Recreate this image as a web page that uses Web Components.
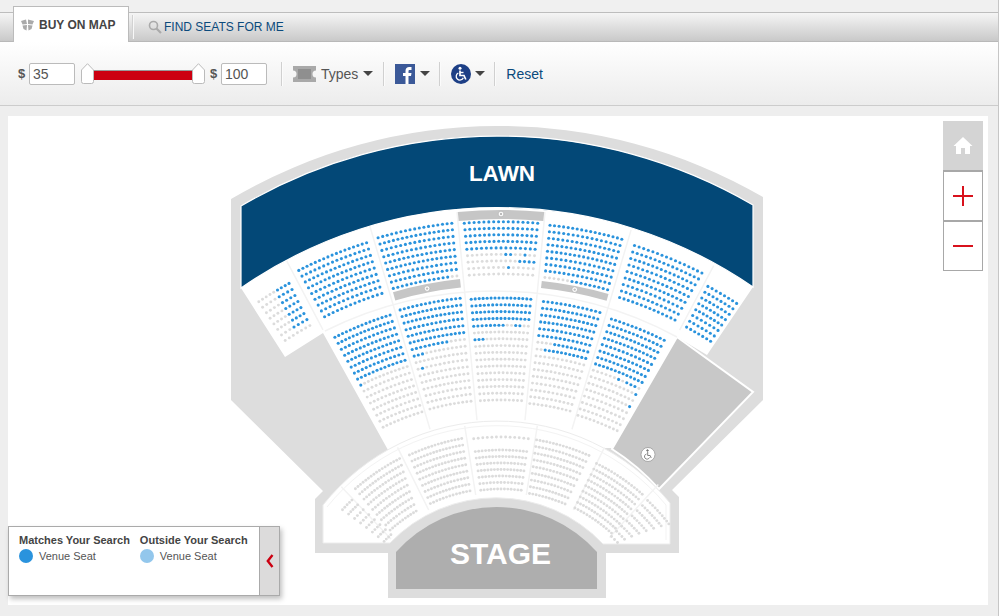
<!DOCTYPE html>
<html lang="en">
<head>
<meta charset="utf-8">
<title>Buy on map</title>
<style>
html, body { margin: 0; padding: 0; background: #eee; }
body { font-family: "Liberation Sans", Arial, sans-serif; color: #444; }
</style>
</head>
<body>
<ticket-app>
    <tab-bar slot="tabs"></tab-bar>
    <filter-bar slot="filters"></filter-bar>
    <seat-map slot="map">
        <map-controls></map-controls>
        <map-legend></map-legend>
    </seat-map>
</ticket-app>

<script>
'use strict';

const CARET = `<svg width="10" height="5" viewBox="0 0 10 5"><path d="M0 0h10L5 5z" fill="#444"/></svg>`;

class TicketApp extends HTMLElement {
    constructor()
    {
        super();
        this.attachShadow({ mode: 'open' }).innerHTML = `
        <style>
        :host {
            display: block;
            width: 998px;
            height: 616px;
            border-right: 1px solid #c6c6c6;
            overflow: hidden;
        }
        </style>
        <slot name="tabs"></slot>
        <slot name="filters"></slot>
        <slot name="map"></slot>`;
    }
}

class TabBar extends HTMLElement {
    constructor()
    {
        super();
        this.attachShadow({ mode: 'open' }).innerHTML = `
        <style>
        :host {
            display: flex;
            align-items: flex-end;
            height: 36px;
            padding: 6px 0 0 13px;
            background: linear-gradient(#f0f0f0 0, #f0f0f0 12px, #bdbdbd 12px, #bdbdbd 13px, #f5f5f5 13px, #c9c9c9 41px, #a9a9a9 42px) 0 0 no-repeat;
            font-size: 12px;
        }
        .active {
            box-sizing: border-box;
            width: 116px;
            height: 36px;
            display: flex;
            align-items: center;
            gap: 4px;
            padding: 0 0 0 6px;
            background: #fff;
            border: 1px solid #bbb;
            border-bottom: 0;
            font-weight: bold;
            color: #444;
        }
        .sep { width: 1px; height: 24px; margin: 0 0 3px 3px; background: #d2d2d2; border-right: 1px solid #f8f8f8; }
        .other {
            display: flex;
            align-items: center;
            gap: 2px;
            height: 30px;
            padding-left: 14px;
            color: #0b4a7c;
        }
        svg { display: block; }
        </style>
        <div class="active">
            <svg width="15" height="12" viewBox="0 0 15 12" fill="#aaa">
                <path d="M1 2 6 .5 7 5 2.500 5.500z"/><path d="M8 .5 14 2 12.500 5.500 8 5z"/>
                <path d="M2.500 6.500 7 6 6.500 11.500 3.500 10z"/><path d="M8 6 12.500 6.500 11.500 10 8.500 11.500z"/>
            </svg>
            <span>BUY ON MAP</span>
        </div>
        <div class="sep"></div>
        <div class="other">
            <svg width="14" height="14" viewBox="0 0 14 14" fill="none" stroke="#aaa">
                <circle cx="5.500" cy="5.500" r="4" stroke-width="1.600"/>
                <path d="M8.500 8.500 13 13" stroke-width="2.200"/>
            </svg>
            <span>FIND SEATS FOR ME</span>
        </div>`;
    }
}

class PriceSlider extends HTMLElement {
    constructor()
    {
        super();
        const handle = `<svg width="13" height="21" viewBox="0 0 13 21"><path d="M.5 7 6.500.7 12.500 7V18.500q0 2-2 2H2.500q-2 0-2-2z" fill="#fff" stroke="#bbb"/></svg>`;
        this.attachShadow({ mode: 'open' }).innerHTML = `
        <style>
        :host { display: flex; align-items: center; height: 21px; }
        .bar { width: 98px; height: 9px; background: #cc0011; border-top: 1px solid #999; margin-top: 2px; }
        svg { display: block; }
        </style>
        ${handle}<div class="bar"></div>${handle}`;
    }
}

class FilterBar extends HTMLElement {
    constructor()
    {
        super();
        this.attachShadow({ mode: 'open' }).innerHTML = `
        <style>
        :host {
            display: flex;
            align-items: center;
            box-sizing: border-box;
            height: 64px;
            padding: 0 0 0 18px;
            background: linear-gradient(#fff, #ececec);
            border-bottom: 1px solid #ccc;
            font-size: 14px;
            color: #555;
        }
        .dollar { font-weight: bold; font-size: 13px; width: 11px; }
        .price {
            box-sizing: border-box;
            width: 46px;
            height: 22px;
            padding-left: 3px;
            line-height: 20px;
            background: #fff;
            border: 1px solid #bbb;
            border-radius: 2px;
        }
        price-slider { margin: 0 5px 0 6px; }
        .sep { width: 1px; height: 24px; background: #d0d0d0; border-right: 1px solid #fbfbfb; }
        .group { display: flex; align-items: center; }
        .reset { color: #0b4a7c; margin-left: 10px; }
        svg { display: block; }
        </style>
        <span class="dollar">$</span><div class="price">35</div>
        <price-slider></price-slider>
        <span class="dollar">$</span><div class="price">100</div>
        <div class="sep" style="margin-left:14px"></div>
        <div class="group" style="margin-left:10px;gap:5px">
            <svg width="23" height="16" viewBox="0 0 23 16">
                <path d="M0 0h23v4.500a3.500 3.500 0 0 0 0 7V16H0v-4.500a3.500 3.500 0 0 0 0-7z" fill="#a9a9a9"/>
                <rect x="5" y="3" width="13" height="10" fill="#8f8f8f"/>
            </svg>
            <span>Types</span>
            ${CARET}
        </div>
        <div class="sep" style="margin-left:10px"></div>
        <div class="group" style="margin-left:10px;gap:5px">
            <svg width="20" height="20" viewBox="0 0 20 20">
                <rect width="20" height="20" fill="#3b5998"/>
                <path d="M10.500 20v-8H8V9h2.500V6.800C10.500 4.300 12 3 14.200 3H16.500v3h-1.600C13.800 6 13.500 6.500 13.500 7.400V9h3l-.5 3h-2.500v8z" fill="#fff"/>
            </svg>
            ${CARET}
        </div>
        <div class="sep" style="margin-left:9px"></div>
        <div class="group" style="margin-left:10px;gap:4px">
            <svg width="20" height="20" viewBox="0 0 20 20">
                <circle cx="10" cy="10" r="10" fill="#1d3f86"/>
                <circle cx="9" cy="4.200" r="1.500" fill="#fff"/>
                <path d="M9 6.500v5h4l1.800 4" fill="none" stroke="#fff" stroke-width="1.700"/>
                <path d="M9 8.500h3.500" fill="none" stroke="#fff" stroke-width="1.400"/>
                <path d="M7.300 9a3.700 3.700 0 1 0 5 4.800" fill="none" stroke="#fff" stroke-width="1.300"/>
            </svg>
            ${CARET}
        </div>
        <div class="sep" style="margin-left:9px"></div>
        <span class="reset">Reset</span>`;
    }
}

// polar helpers, angle in degrees from straight up
function polar(cx, cy, r, deg)
{
    const a = deg * Math.PI / 180;
    return [cx + r * Math.sin(a), cy - r * Math.cos(a)];
}

const UP = [501, 669];
const LOW = [501, 655];

function wedge(r0, r1, a0, a1)
{
    const p = [polar(...UP, r0, a0), polar(...UP, r0, a1), polar(...UP, r1, a1), polar(...UP, r1, a0)]
        .map(q => q.map(v => v.toFixed(1)).join(' '));
    return `M${p[0]}A${r0} ${r0} 0 0 1 ${p[1]}L${p[2]}A${r1} ${r1} 0 0 0 ${p[3]}Z`;
}

// outer/inner start and end angle, first and last row radius, row count, seat pitch,
// blue ranges per row (0..1 across the row); missing row = grey, true = all blue
const SECTIONS = [
    { c: UP, a: [-33.4, -28.8], b: [-33.3, -29.1], r: [440, 393], rows: 8, sp: 4.6,
        blue: [[[.52, 1]], [[.55, 1]], [[.5, 1]], [[.55, 1]], [[.5, 1]], [[.5, 1]], [[.5, 1]]] },
    { c: UP, a: [-26.9, -17.5], b: [-26.6, -17.6], r: [447, 394], rows: 9, sp: 4.7, blue: 'all' },
    { c: UP, a: [-15.9, -6.3], b: [-15.8, -6.4], r: [448.5, 395.5], rows: 9, sp: 4.7,
        blue: [true, true, true, true, true, true, true, true, [[0, .92]]] },
    { c: UP, a: [-4.7, 4.7], b: [-4.6, 4.6], r: [447.3, 395], rows: 9, sp: 4.8,
        blue: [true, true, true, true, true, [[.55, .66], [.8, .92]], [[.78, 1]], [[.58, .63]]] },
    { c: UP, a: [6.3, 15.7], b: [6.4, 15.7], r: [446.5, 394], rows: 9, sp: 4.7,
        blue: [true, true, true, true, true, true, true, true, [[.42, 1]]] },
    { c: UP, a: [17.5, 26.9], b: [17.7, 26.5], r: [444, 390], rows: 9, sp: 4.7, blue: 'all' },
    { c: UP, a: [28.4, 32.8], b: [28.5, 32.6], r: [435, 389], rows: 8, sp: 4.6, blue: 'all' },

    { c: UP, a: [-26.6, -17.4], b: [-26, -17.1], r: [371, 269], rows: 16, sp: 4.3,
        blue: [true, true, true, true, true, true, true, true, [[0, .05]]] },
    { c: UP, a: [-15.7, -6.3], b: [-15.3, -6.4], r: [373, 269.500], rows: 16, sp: 4.3,
        blue: [true, true, true, true, true, true, [[0, .68]], [[0, .2]], null, [[.06, .12]]] },
    { c: UP, a: [-4.6, 4.6], b: [-4.4, 4.4], r: [371, 269], rows: 16, sp: 4.1,
        blue: [true, true, true, true, [[0, .55], [.7, .85]], null, [[0, .19]]] },
    { c: UP, a: [6.6, 15.5], b: [6.2, 15], r: [370, 267], rows: 16, sp: 4.3,
        blue: [true, true, true, true, true, true, [[.28, 1]], [[.14, 1]]] },
    { c: UP, a: [17.5, 26.4], b: [16.9, 26], r: [367, 265], rows: 16, sp: 4.3,
        blue: [true, true, true, true, true, true, true, true, [[.5, .56], [.68, .96]], [[.92, 1]], null, [[.94, 1]]] },

    { c: LOW, a: [-7.2, 7.2], b: [-7.2, 7.2], r: [218, 218], rows: 1, sp: 4.4 },
    { c: LOW, a: [-7.2, 7.2], b: [-7, 7], r: [205, 166], rows: 7, sp: 3.4 },
    { c: LOW, a: [-24.6, -10.3], b: [-25, -10.7], r: [220, 167], rows: 9, sp: 3.4 },
    { c: LOW, a: [9.4, 23.8], b: [10, 23], r: [218, 164], rows: 9, sp: 3.4 },
    { c: LOW, a: [-41.2, -27.3], b: [-41.6, -30.5], r: [221, 167], rows: 9, sp: 3.4 },
    { c: LOW, a: [26.5, 41.3], b: [26.7, 42.2], r: [214, 164.500], rows: 9, sp: 3.4 },
    { c: LOW, a: [-47.5, -43.9], b: [-45.8, -42.5], r: [215, 163], rows: 8, sp: 3.6 },
    { c: LOW, a: [43.5, 52], b: [43, 46], r: [213, 162], rows: 8, sp: 3.6 },
];

function seatDots()
{
    let out = '';
    for (const s of SECTIONS) {
        for (let row = 0; row < s.rows; row++) {
            const f = s.rows > 1 ? row / (s.rows - 1) : 0;
            const r = s.r[0] + (s.r[1] - s.r[0]) * f;
            const a0 = s.a[0] + (s.b[0] - s.a[0]) * f;
            const a1 = s.a[1] + (s.b[1] - s.a[1]) * f;
            const arc = (a1 - a0) * Math.PI / 180 * r;
            const n = Math.round(arc / s.sp);
            const spec = s.blue === 'all' ? true : (s.blue ? s.blue[row] : null);
            for (let i = 0; i <= n; i++) {
                const t = i / n;
                const [x, y] = polar(...s.c, r, a0 + (a1 - a0) * t);
                const on = spec === true || (Array.isArray(spec) && spec.some(q => t >= q[0] && t <= q[1]));
                out += `<circle cx="${x.toFixed(1)}" cy="${y.toFixed(1)}" r="${on ? 1.55 : 1.45}" fill="${on ? '#2a93dd' : '#dcdcdc'}"/>`;
            }
        }
    }
    return out;
}

function radial(c, deg, r0, r1)
{
    const [x0, y0] = polar(...c, r0, deg);
    const [x1, y1] = polar(...c, r1, deg);
    return `M${x0.toFixed(1)} ${y0.toFixed(1)}L${x1.toFixed(1)} ${y1.toFixed(1)}`;
}

function aisleMark(x, y)
{
    return `<circle cx="${x}" cy="${y}" r="2.800" fill="#fff" stroke="#aaa" stroke-width=".6"/><circle cx="${x}" cy="${y}" r="1.200" fill="#bbb"/>`;
}

class SeatMap extends HTMLElement {
    constructor()
    {
        super();
        const lines = [
            radial(UP, -5.5, 250, 459), radial(UP, 5.5, 250, 459),
            radial(UP, -16.5, 250, 462), radial(UP, 16.5, 250, 458),
            radial(UP, -27.7, 383, 461), radial(UP, 27.8, 383, 456),
            radial(LOW, -9, 162, 232), radial(LOW, 9, 162, 232),
            radial(LOW, -26.5, 162, 232), radial(LOW, 26.5, 162, 232),
            radial(LOW, -43.5, 160, 232), radial(LOW, 42.7, 160, 232),
        ].join('');
        const mid = polar(...UP, 387.5, -11);
        const mid2 = polar(...UP, 386.5, 11);
        this.attachShadow({ mode: 'open' }).innerHTML = `
        <style>
        :host {
            display: block;
            position: relative;
            width: 980px;
            height: 489px;
            margin: 10px 0 0 8px;
            background: #fff;
        }
        svg { display: block; }
        text { font-family: "Liberation Sans", Arial, sans-serif; font-weight: bold; fill: #fff; text-anchor: middle; }
        </style>
        <svg width="980" height="489" viewBox="8 116 980 489">
            <path d="M231 199A527 527 0 0 1 763 197V400L672 490 679 497V553H606V598H388V553H315V499L323 491 231 400Z" fill="#dddddd"/>
            <path d="M241 288A450 450 0 0 1 753 287L707 355 677 337 613 448 388 450 323 333 285 357Z" fill="#fff"/>
            <path d="M241 206A507 507 0 0 1 753 205V287A450 450 0 0 0 241 288Z" fill="#034877" stroke="#fff" stroke-width="1.200"/>
            <path d="M677 337 753 392 659 489A223 223 0 0 0 612 449Z" fill="#c8c8c8" stroke="#fff" stroke-width="2"/>
            <path d="M323 505A223 223 0 0 1 670 503V544H603A147 147 0 0 0 390 543H323Z" fill="#fff" stroke="#ececec"/>
            <path d="M327 507A219 219 0 0 1 666 505V540" fill="none" stroke="#f3f3f3"/>
            <path d="${lines}M325 331A383 383 0 0 1 677 337" fill="none" stroke="#f3f3f3" stroke-width="1.500"/>
            <path d="${wedge(459, 450, -5.4, 5.4)}" fill="#c6c6c6"/>
            <path d="${wedge(392, 383.500, -16, -6)}" fill="#c6c6c6"/>
            <path d="${wedge(390, 383, 6, 16)}" fill="#c6c6c6"/>
            ${aisleMark(501, 214)}
            ${aisleMark(mid[0].toFixed(1), mid[1].toFixed(1))}
            ${aisleMark(mid2[0].toFixed(1), mid2[1].toFixed(1))}
            ${seatDots()}
            <path d="M396 552A134.700 134.700 0 0 1 597 552V589H396Z" fill="#aeaeae"/>
            <text x="502" y="181" font-size="22.500">LAWN</text>
            <text x="500.500" y="564" font-size="30">STAGE</text>
            <circle cx="648" cy="454.500" r="7" fill="#fff" stroke="#999" stroke-width=".8"/>
            <g fill="none" stroke="#777" stroke-width=".9">
                <circle cx="647.500" cy="450.500" r=".8" fill="#777"/>
                <path d="M647.700 452v3.500h2.500l1 2.500"/>
                <path d="M646.500 454a2.600 2.600 0 1 0 3 3.500"/>
            </g>
        </svg>
        <slot></slot>`;
    }
}

class MapControls extends HTMLElement {
    constructor()
    {
        super();
        this.attachShadow({ mode: 'open' }).innerHTML = `
        <style>
        :host {
            position: absolute;
            top: 5px;
            left: 935px;
            display: flex;
            flex-direction: column;
            width: 40px;
        }
        .btn {
            box-sizing: border-box;
            height: 50px;
            display: flex;
            align-items: center;
            justify-content: center;
            background: #fff;
            border: 1px solid #a8a8a8;
        }
        .btn.home { background: #d4d4d4; border: 0; border-bottom: 1px solid #a8a8a8; }
        svg { display: block; }
        </style>
        <div class="btn home">
            <svg width="20" height="19" viewBox="0 0 20 19"><path d="M10 1 19.500 10H17V18H12V12H8V18H3V10H.5z" fill="#fff"/></svg>
        </div>
        <div class="btn">
            <svg width="20" height="20" viewBox="0 0 20 20"><path d="M0 10h20M10 0v20" stroke="#d8111c" stroke-width="2"/></svg>
        </div>
        <div class="btn">
            <svg width="20" height="4" viewBox="0 0 20 4"><path d="M0 2h20" stroke="#d8111c" stroke-width="2"/></svg>
        </div>`;
    }
}

class MapLegend extends HTMLElement {
    constructor()
    {
        super();
        this.attachShadow({ mode: 'open' }).innerHTML = `
        <style>
        :host {
            position: absolute;
            left: 0;
            top: 410px;
            box-sizing: border-box;
            width: 272px;
            height: 70px;
            display: flex;
            background: #fff;
            border: 1px solid #aaa;
            box-shadow: 2px 3px 5px rgba(0, 0, 0, .25);
            font-size: 11px;
            color: #555;
            white-space: nowrap;
        }
        .body { flex: 1; display: flex; padding: 7px 0 0 10px; }
        .col { margin-right: 10px; }
        h4 { margin: 0 0 2px; font-size: 11px; line-height: 13px; color: #444; }
        .row { display: flex; align-items: center; gap: 6px; height: 14px; }
        i { display: block; width: 14px; height: 14px; border-radius: 50%; }
        .tail {
            width: 19px;
            display: flex;
            align-items: center;
            justify-content: center;
            background: #dcdbdb;
            border-left: 1px solid #aaa;
        }
        svg { display: block; }
        </style>
        <div class="body">
            <div class="col"><h4>Matches Your Search</h4><div class="row"><i style="background:#2a93dd"></i>Venue Seat</div></div>
            <div class="col"><h4>Outside Your Search</h4><div class="row"><i style="background:#93c7ec"></i>Venue Seat</div></div>
        </div>
        <div class="tail">
            <svg width="8" height="14" viewBox="0 0 8 14"><path d="M6.500 1 1.800 7l4.700 6" fill="none" stroke="#cc0011" stroke-width="2.400"/></svg>
        </div>`;
    }
}

customElements.define('ticket-app', TicketApp);
customElements.define('tab-bar', TabBar);
customElements.define('price-slider', PriceSlider);
customElements.define('filter-bar', FilterBar);
customElements.define('seat-map', SeatMap);
customElements.define('map-controls', MapControls);
customElements.define('map-legend', MapLegend);
</script>
</body>
</html>
